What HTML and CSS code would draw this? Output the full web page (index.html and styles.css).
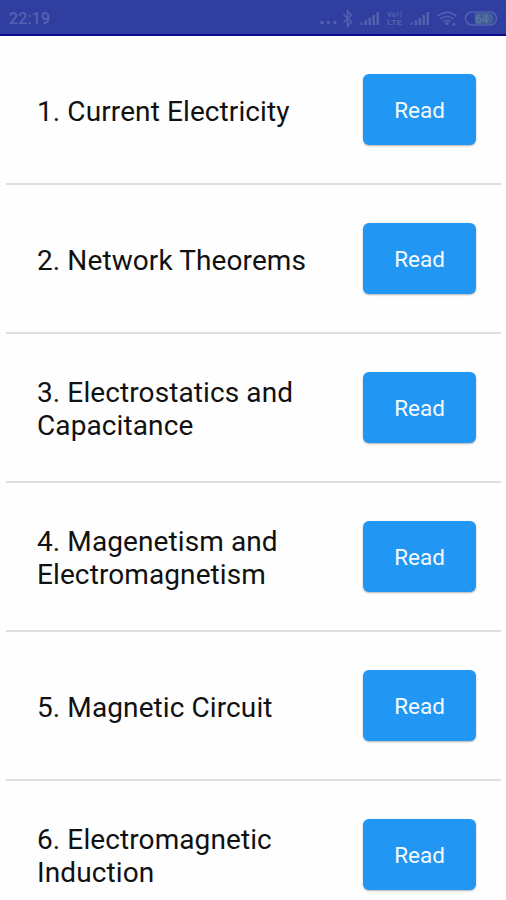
FILE: index.html
```html
<!DOCTYPE html>
<html lang="en">
<head>
<meta charset="utf-8">
<title>Chapters</title>
<link rel="stylesheet" href="styles.css">
</head>
<body>
<header class="status">
  <span class="clock">22:19</span>
  <svg class="icons" width="182" height="24" viewBox="0 0 182 24" aria-hidden="true">
    <g class="fill">
      <circle cx="5" cy="17.500" r="1.700"/><circle cx="11.500" cy="17.500" r="1.700"/><circle cx="18" cy="17.500" r="1.700"/>
      <path d="M43.500 17.500h2V20h-2zM47.500 15.500h2.500V20h-2.500zM51.500 13h2.500v7h-2.500zM55.500 10h2.500v10h-2.500zM59.500 7h2.500v13h-2.500z"/>
      <path d="M93.500 17.500h2V20h-2zM97.500 15.500h2.500V20h-2.500zM101.500 13h2.500v7h-2.500zM105.500 10h2.500v10h-2.500zM109.500 7h2.500v13h-2.500z"/>
      <circle cx="130" cy="18.500" r="1.800"/><circle cx="137" cy="19.500" r="1.400"/>
    </g>
    <path class="line" d="M26.500 9.500l8 7.500-4 4V6l4 4-8 7.500"/>
    <path class="line" d="M120.500 11q9.500-7.500 19 0M123.500 14q6.500-5 13 0M126.500 16.500q3.500-2.500 7 0"/>
    <text class="volte" x="70" y="11.500" textLength="9" lengthAdjust="spacingAndGlyphs">Vo</text>
    <path class="thin" d="M80.500 6.500q2 2.500 0 5M83.500 6q2.500 3 0 6"/>
    <text class="volte" x="70" y="20" textLength="15" lengthAdjust="spacingAndGlyphs">LTE</text>
    <path class="charge" d="M158 8h13q5.500 0 5.500 5.500T171 19h-13z"/>
    <rect class="line" x="148.500" y="7" width="31" height="13" rx="6.500"/>
    <text class="level" x="158" y="18">64</text>
  </svg>
</header>
<main>
  <section class="row"><h2>1. Current Electricity</h2><button>Read</button></section>
  <section class="row"><h2>2. Network Theorems</h2><button>Read</button></section>
  <section class="row"><h2>3. Electrostatics and Capacitance</h2><button>Read</button></section>
  <section class="row"><h2>4. Magenetism and Electromagnetism</h2><button>Read</button></section>
  <section class="row"><h2>5. Magnetic Circuit</h2><button>Read</button></section>
  <section class="row"><h2>6. Electromagnetic Induction</h2><button>Read</button></section>
</main>
</body>
</html>
```
FILE: styles.css
```css
* { box-sizing: border-box; }
body {
  margin: 0;
  height: 900px;
  overflow: hidden;
  background: #fefefe;
  font-family: Roboto, "Liberation Sans", sans-serif;
}
.status {
  height: 36px;
  padding: 0 7px 0 9px;
  display: flex;
  align-items: center;
  justify-content: space-between;
  background: #303f9f;
  border-bottom: 2px solid #080c8c;
}
.clock {
  color: #5662b1;
  font-size: 16px;
  font-weight: 500;
  letter-spacing: .1px;
  padding-top: 3px;
}
.icons { display: block; }
.fill { fill: #5360af; }
.line { fill: none; stroke: #5360af; stroke-width: 1.6; }
.thin { fill: none; stroke: #5360af; stroke-width: 1; }
.charge { fill: #3f6296; }
.volte { fill: #5360af; font-size: 7px; font-weight: 700; }
.level { fill: #6074a4; font-size: 12px; font-weight: 500; }
.row {
  height: 149px;
  margin: 0 5px 0 6px;
  padding: 0 25px 0 31px;
  display: flex;
  align-items: center;
  justify-content: space-between;
  border-bottom: 2px solid #dedede;
}
h2 {
  margin: 0;
  padding-top: 3px;
  width: 290px;
  color: #111;
  font-size: 28px;
  font-weight: 400;
  line-height: 33px;
  letter-spacing: .1px;
}
button {
  width: 113px;
  height: 71px;
  padding: 0;
  border: 0;
  border-radius: 6px;
  background: #2196f3;
  box-shadow: 0 1px 2px rgba(0, 0, 0, .3);
  color: #f4faff;
  font: 400 22.5px Roboto, "Liberation Sans", sans-serif;
}
```
